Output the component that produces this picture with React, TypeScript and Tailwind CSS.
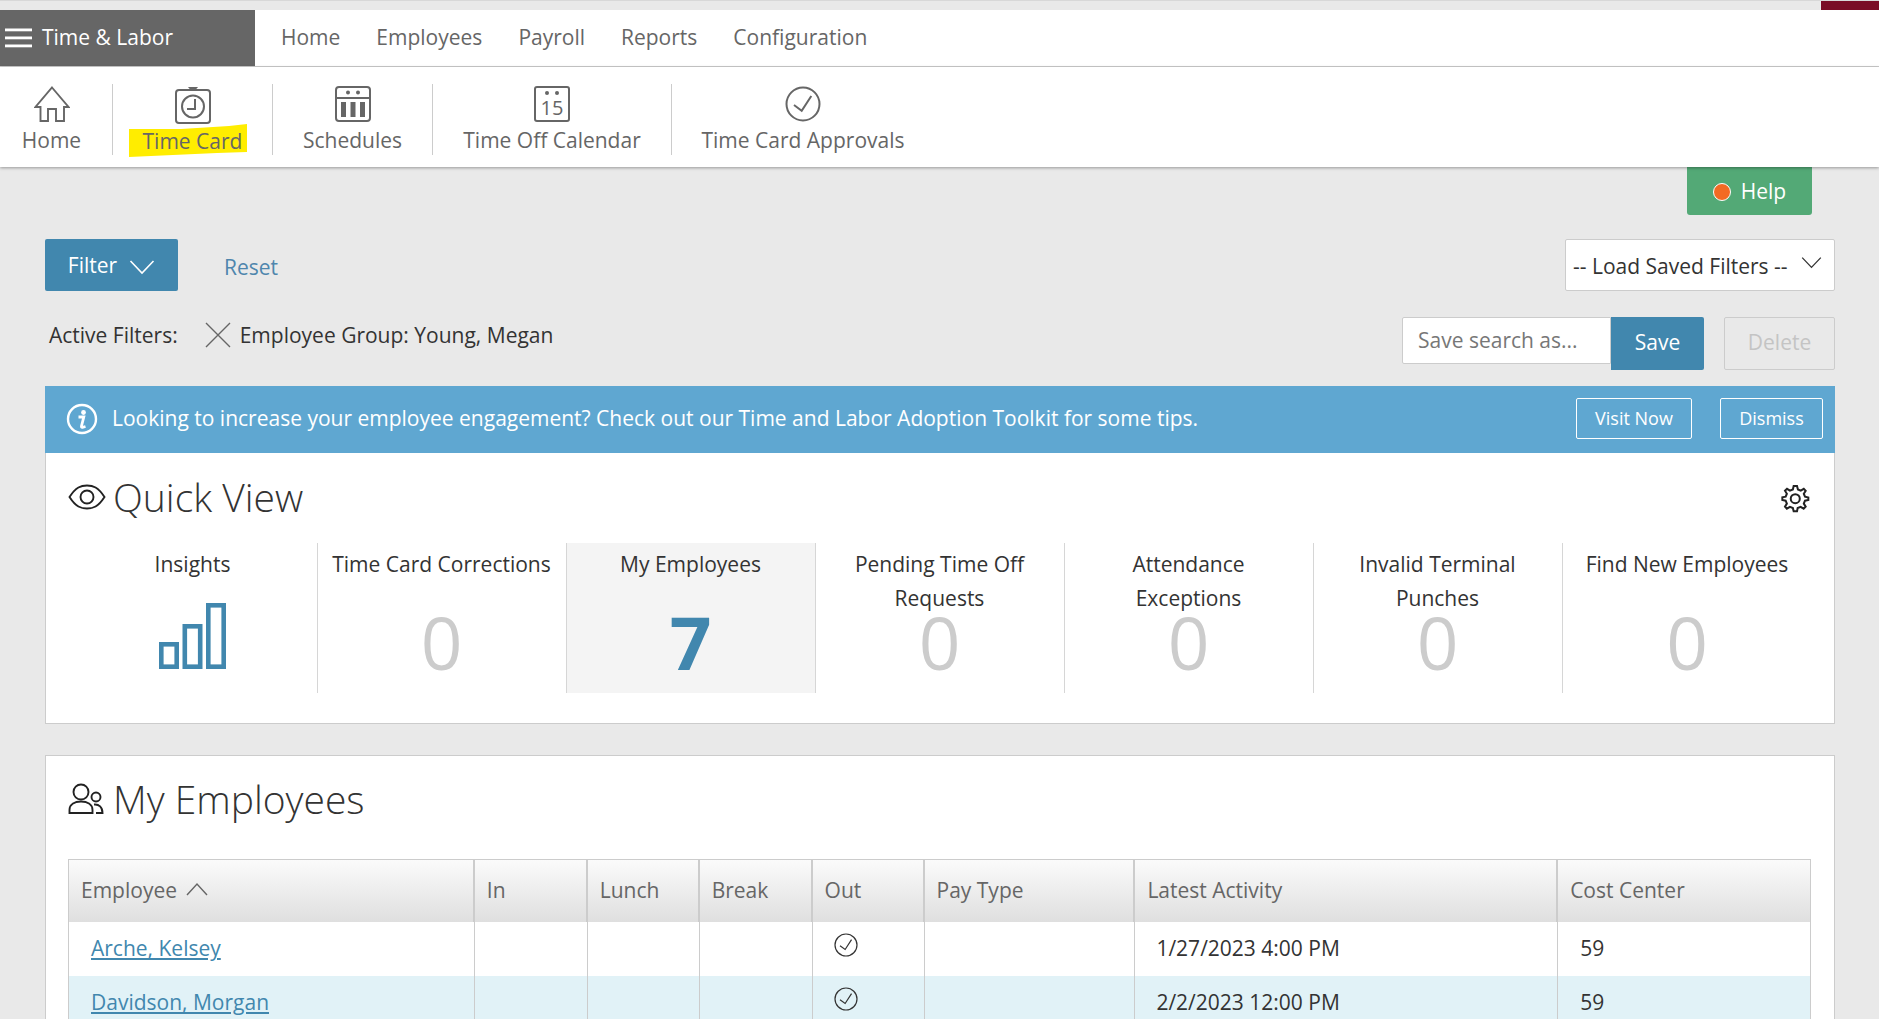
const FONT = "font-['Open_Sans',sans-serif]";

function ChevronDown({ className }: { className?: string }) {
  return (
    <svg viewBox="0 0 26 16" className={className} fill="none" stroke="currentColor" strokeWidth="1.6">
      <path d="M1.5 2 L13 14 L24.5 2" />
    </svg>
  );
}

function HomeIcon() {
  return (
    <svg width="36" height="36" viewBox="0 0 36 36" fill="none" stroke="#666" strokeWidth="1.9">
      <path d="M18 1.5 L34.5 21 H30 V35 H22 V23 H14 V35 H6.5 V21 H1.5 Z" />
    </svg>
  );
}

function StopwatchIcon() {
  return (
    <svg width="36" height="38" viewBox="0 0 36 38" fill="none" stroke="#666" strokeWidth="2">
      <path d="M13 1 H23 L20.5 4 H15.5 Z" fill="#666" stroke="none" />
      <rect x="1" y="4" width="34" height="33" rx="3" />
      <circle cx="18" cy="20.5" r="11" />
      <path d="M20 13 V23 H12" />
    </svg>
  );
}

function ScheduleIcon() {
  return (
    <svg width="36" height="36" viewBox="0 0 36 36" fill="none" stroke="#666" strokeWidth="2">
      <rect x="1" y="1" width="34" height="34" rx="3" />
      <path d="M1 12 H35" />
      <circle cx="13" cy="6.5" r="2" fill="#666" stroke="none" />
      <circle cx="23" cy="6.5" r="2" fill="#666" stroke="none" />
      <rect x="6" y="16" width="5" height="15" fill="#666" stroke="none" />
      <rect x="15.5" y="16" width="5" height="15" fill="#666" stroke="none" />
      <rect x="25" y="16" width="5" height="15" fill="#666" stroke="none" />
    </svg>
  );
}

function CalendarIcon() {
  return (
    <div className="relative w-[36px] h-[36px] rounded-[3px] border-2 border-[#666]">
      <span className="absolute left-[9px] top-[3px] w-[4px] h-[4px] rounded-full bg-[#666]" />
      <span className="absolute left-[19px] top-[3px] w-[4px] h-[4px] rounded-full bg-[#666]" />
      <span className="absolute inset-x-0 top-[9px] text-center text-[20px] leading-[22px] text-[#666]">15</span>
    </div>
  );
}

function CircleCheck({ size, color, width }: { size: number; color: string; width: number }) {
  return (
    <svg width={size} height={size} viewBox="0 0 36 36" fill="none" stroke={color} strokeWidth={width}>
      <circle cx="18" cy="18" r="16.5" />
      <path d="M9 19 L16.7 24.7 L26.3 10" />
    </svg>
  );
}

function SubNavItem({ icon, label, active, w, noBorder, extra }: { icon: React.ReactNode; label: string; active?: boolean; w: string; noBorder?: boolean; extra?: string }) {
  return (
    <div className={`flex flex-col items-center justify-start pt-[2px] ${w} h-[71px] mt-[17px] ${noBorder ? "" : "border-r border-[#ccc]"} ${extra ?? ""}`}>
      <div className="h-[37px] flex items-center">{icon}</div>
      <div className="relative mt-[3px] text-[21px] leading-[30px] text-[#666] whitespace-nowrap">
        {active && (
          <svg width="118" height="33" viewBox="0 0 118 33" className="absolute left-[-14px] top-[-2px]">
            <path d="M0 5 L52 5 L100 2 L118 0 L118 28 L88 29 L0 33 Z" fill="#ffed00" />
          </svg>
        )}
        <span className="relative">{label}</span>
      </div>
    </div>
  );
}

function BarsIcon() {
  return (
    <svg width="67" height="66" viewBox="0 0 67 66" fill="none" stroke="#4187ae" strokeWidth="4.6">
      <rect x="2.3" y="41.3" width="15.4" height="22.4" />
      <rect x="25.8" y="23.3" width="15.4" height="40.4" />
      <rect x="49.3" y="2.3" width="15.4" height="61.4" />
    </svg>
  );
}

function QuickCard({ title, value, active, last, icon }: { title: React.ReactNode; value?: string; active?: boolean; last?: boolean; icon?: React.ReactNode }) {
  return (
    <div className={`relative h-[150px] w-[249px] flex flex-col items-center text-center ${last ? "" : "border-r border-[#d6d6d6]"} ${active ? "bg-[#f4f4f4]" : ""}`}>
      <div className="mt-[4px] text-[21px] leading-[34px] text-[#333]">{title}</div>
      {icon && <div className="absolute top-[60px]">{icon}</div>}
      {value && (
        <div className={`absolute top-[71px] text-[73px] leading-[56px] ${active ? "font-bold text-[#4187ae]" : "text-[#ccc]"}`}>{value}</div>
      )}
    </div>
  );
}

const cols = [
  { label: "Employee", w: "w-[406px]" },
  { label: "In", w: "w-[113px]" },
  { label: "Lunch", w: "w-[112px]" },
  { label: "Break", w: "w-[113px]" },
  { label: "Out", w: "w-[112px]" },
  { label: "Pay Type", w: "w-[211px]" },
  { label: "Latest Activity", w: "w-[423px]" },
  { label: "Cost Center", w: "w-[252px]" },
];

function Row({ name, date, alt }: { name: string; date: string; alt?: boolean }) {
  const cell = "h-full border-r border-[#ccc] flex items-center";
  return (
    <div className={`flex h-[54px] text-[21px] ${alt ? "bg-[#e1f2f7]" : "bg-white"}`}>
      <div className={`${cell} w-[406px] pl-[22px]`}>
        <a className="text-[#4187ae] underline">{name}</a>
      </div>
      <div className={`${cell} w-[113px]`} />
      <div className={`${cell} w-[112px]`} />
      <div className={`${cell} w-[113px]`} />
      <div className={`${cell} w-[112px] pl-[21px] pb-[9px]`}>
        <CircleCheck size={24} color="#333" width={1.8} />
      </div>
      <div className={`${cell} w-[211px]`} />
      <div className={`${cell} w-[423px] pl-[21px] text-[#333]`}>{date}</div>
      <div className="h-full w-[252px] flex items-center pl-[22px] text-[#333]">59</div>
    </div>
  );
}

export default function App() {
  return (
    <div className={`${FONT} w-[1879px] h-[1019px] overflow-hidden bg-[#e9e9e9] relative`}>
      {/* top strip */}
      <div className="h-[10px] flex justify-end border-t border-[#d8d8d8]">
        <div className="w-[58px] h-full bg-[#7a0c25]" />
      </div>

      {/* main nav */}
      <nav className="h-[57px] bg-white border-b border-[#ccc] flex">
        <div className="w-[255px] h-[56px] bg-[#666] text-white flex items-center pl-[5px] gap-[10px]">
          <svg width="27" height="20" viewBox="0 0 27 20" fill="#fff">
            <rect width="27" height="2.8" y="0.5" />
            <rect width="27" height="2.8" y="8.5" />
            <rect width="27" height="2.8" y="16.5" />
          </svg>
          <span className="text-[21px]">Time &amp; Labor</span>
        </div>
        <div className="flex items-center pl-[26px] gap-[36px] text-[21px] text-[#666]">
          <span>Home</span>
          <span>Employees</span>
          <span>Payroll</span>
          <span>Reports</span>
          <span>Configuration</span>
        </div>
      </nav>

      {/* sub nav */}
      <div className="h-[100px] bg-white shadow-[0_1px_3px_rgba(0,0,0,0.35)] flex relative">
        <SubNavItem icon={<HomeIcon />} label="Home" w="w-[113px]" extra="pr-[9px]" />
        <SubNavItem icon={<StopwatchIcon />} label="Time Card" active w="w-[160px]" />
        <SubNavItem icon={<ScheduleIcon />} label="Schedules" w="w-[160px]" />
        <SubNavItem icon={<CalendarIcon />} label="Time Off Calendar" w="w-[239px]" />
        <SubNavItem icon={<CircleCheck size={36} color="#666" width={2} />} label="Time Card Approvals" w="w-[262px]" noBorder />
      </div>

      <div className="px-[45px] w-[1880px]">
        <div className="flex justify-end pr-[23px]">
          <div className="w-[125px] h-[48px] pt-[1px] bg-[#53a976] rounded-b-[3px] text-white text-[21px] flex items-center justify-center gap-[10px]">
            <span className="w-[18px] h-[18px] rounded-full bg-[#f36a23] border border-white mt-[1px]" />
            Help
          </div>
        </div>

        {/* filter row */}
        <div className="mt-[24px] flex items-start justify-between">
          <div className="flex items-center">
            <button className="w-[133px] h-[52px] pt-[1px] bg-[#4187ae] text-white text-[21px] rounded-[2px] flex items-center justify-center gap-[12px]">
              Filter
              <ChevronDown className="w-[26px] h-[16px] mt-[3px]" />
            </button>
            <span className="ml-[46px] mt-[5px] text-[21px] text-[#4f86ad]">Reset</span>
          </div>
          <div className="w-[270px] h-[52px] bg-white border border-[#ccc] rounded-[2px] flex items-center pl-[7px] pt-[3px] text-[21px] text-[#333] relative">
            -- Load Saved Filters --
            <ChevronDown className="absolute right-[12px] top-[16px] w-[21px] h-[13px]" />
          </div>
        </div>

        {/* active filters */}
        <div className="mt-[26px] h-[53px] flex items-start justify-between">
          <div className="flex items-center text-[21px] text-[#333] mt-[-1px] h-[40px] pl-[4px]">
            <span>Active Filters:</span>
            <svg width="26" height="26" viewBox="0 0 26 26" className="ml-[27px] mr-[9px] mb-[2px]" stroke="#666" strokeWidth="1.4">
              <path d="M1 1 L25 25 M25 1 L1 25" />
            </svg>
            <span>Employee Group: Young, Megan</span>
          </div>
          <div className="flex items-start">
            <div className="w-[209px] h-[47px] pt-[1px] bg-white border border-[#ccc] rounded-l-[2px] flex items-center pl-[15px] text-[21px] text-[#777]">Save search as...</div>
            <div className="w-[93px] h-[53px] pb-[2px] bg-[#4187ae] text-white text-[21px] rounded-r-[2px] flex items-center justify-center">Save</div>
            <div className="ml-[20px] w-[111px] h-[53px] pb-[2px] border border-[#ccc] rounded-[2px] text-[#c4c4c4] text-[21px] flex items-center justify-center">Delete</div>
          </div>
        </div>

        {/* banner */}
        <div className="mt-[16px] h-[67px] pb-[2px] bg-[#5fa7d1] flex items-center text-white relative">
          <svg width="32" height="32" viewBox="0 0 32 32" className="ml-[21px]" fill="none" stroke="#fff" strokeWidth="2.4">
            <circle cx="16" cy="16" r="14" />
            <circle cx="17.5" cy="9.5" r="2.4" fill="#fff" stroke="none" />
            <path d="M12.5 14 H17.8 L15.5 23 Q15.2 24.5 16.5 24.3 L19.5 23.5" strokeWidth="2.8" />
          </svg>
          <span className="ml-[14px] text-[21px]">Looking to increase your employee engagement? Check out our Time and Labor Adoption Toolkit for some tips.</span>
          <div className="ml-auto flex items-center gap-[28px] pr-[12px]">
            <button className="w-[116px] h-[41px] border border-white rounded-[2px] text-[18px]">Visit Now</button>
            <button className="w-[103px] h-[41px] border border-white rounded-[2px] text-[18px]">Dismiss</button>
          </div>
        </div>

        {/* Quick view */}
        <section className="h-[271px] bg-white border border-t-0 border-[#ccc] relative">
          <div className="flex items-center h-[90px] pb-[3px] pl-[22px]">
            <svg width="38" height="28" viewBox="0 0 38 28" fill="none" stroke="#222" strokeWidth="1.9">
              <path d="M1.5 14 C8 4 13 2.5 19 2.5 C25 2.5 30 4 36.5 14 C30 24 25 25.5 19 25.5 C13 25.5 8 24 1.5 14 Z" />
              <circle cx="19" cy="14" r="6.5" />
            </svg>
            <h2 className="ml-[7px] text-[39px] font-light text-[#333] leading-none">Quick View</h2>
            <svg width="32" height="32" viewBox="0 0 24 24" className="absolute right-[23px] top-[29px]" fill="none" stroke="#222" strokeWidth="1.5">
              <path d="M12 3 L13.5 3 L14.2 5.6 L16.3 6.5 L18.6 5.1 L20 6.6 L18.6 8.8 L19.5 11 L22 11.6 L22 13.5 L19.5 14 L18.6 16.2 L20 18.5 L18.5 20 L16.2 18.6 L14 19.5 L13.5 22 L11 22 L10.4 19.5 L8.2 18.6 L5.9 20 L4.5 18.5 L5.9 16.2 L5 14 L2.5 13.5 L2.5 11.5 L5 11 L5.9 8.8 L4.5 6.5 L6 5.1 L8.2 6.5 L10.4 5.6 L11 3 Z" />
              <circle cx="12.2" cy="12.5" r="3.4" />
            </svg>
          </div>
          <div className="flex pl-[22.5px]">
            <QuickCard title="Insights" icon={<BarsIcon />} />
            <QuickCard title="Time Card Corrections" value="0" />
            <QuickCard title="My Employees" value="7" active />
            <QuickCard title={<>Pending Time Off<br />Requests</>} value="0" />
            <QuickCard title={<>Attendance<br />Exceptions</>} value="0" />
            <QuickCard title={<>Invalid Terminal<br />Punches</>} value="0" />
            <QuickCard title="Find New Employees" value="0" last />
          </div>
        </section>

        {/* My employees */}
        <section className="mt-[31px] bg-white border border-[#ccc] h-[400px] relative">
          <div className="flex items-center h-[103px] pb-[18px] pl-[22px]">
            <svg width="36" height="34" viewBox="0 0 36 34" fill="none" stroke="#222" strokeWidth="1.9">
              <circle cx="13" cy="10" r="7.5" />
              <path d="M1.5 31 V28 C1.5 22 7 19.5 13 19.5 C19 19.5 24.5 22 24.5 28 V31 Z" />
              <circle cx="28" cy="15" r="4.5" />
              <path d="M26 22.5 C31 22 34.5 25 34.5 31 H28" />
            </svg>
            <h2 className="ml-[9px] text-[39px] font-light text-[#333] leading-none">My Employees</h2>
          </div>
          <div className="ml-[22px] w-[1743px]">
            <div className="flex h-[63px] border border-b-0 border-[#ccc] bg-gradient-to-b from-[#fbfbfb] to-[#dfdfdf] text-[21px] text-[#666]">
              {cols.map((c, i) => (
                <div key={c.label} className={`${c.w} h-full flex items-center pl-[12px] ${i < cols.length - 1 ? "border-r-2 border-[#ccc]" : ""}`}>
                  {c.label}
                  {i === 0 && (
                    <svg width="22" height="14" viewBox="0 0 22 14" className="ml-[9px] mb-[4px]" fill="none" stroke="#666" strokeWidth="1.4">
                      <path d="M1 13 L11 2 L21 13" />
                    </svg>
                  )}
                </div>
              ))}
            </div>
            <div className="border-x border-[#ccc]">
              <Row name="Arche, Kelsey" date="1/27/2023 4:00 PM" />
              <Row name="Davidson, Morgan" date="2/2/2023 12:00 PM" alt />
            </div>
          </div>
        </section>
      </div>
    </div>
  );
}
